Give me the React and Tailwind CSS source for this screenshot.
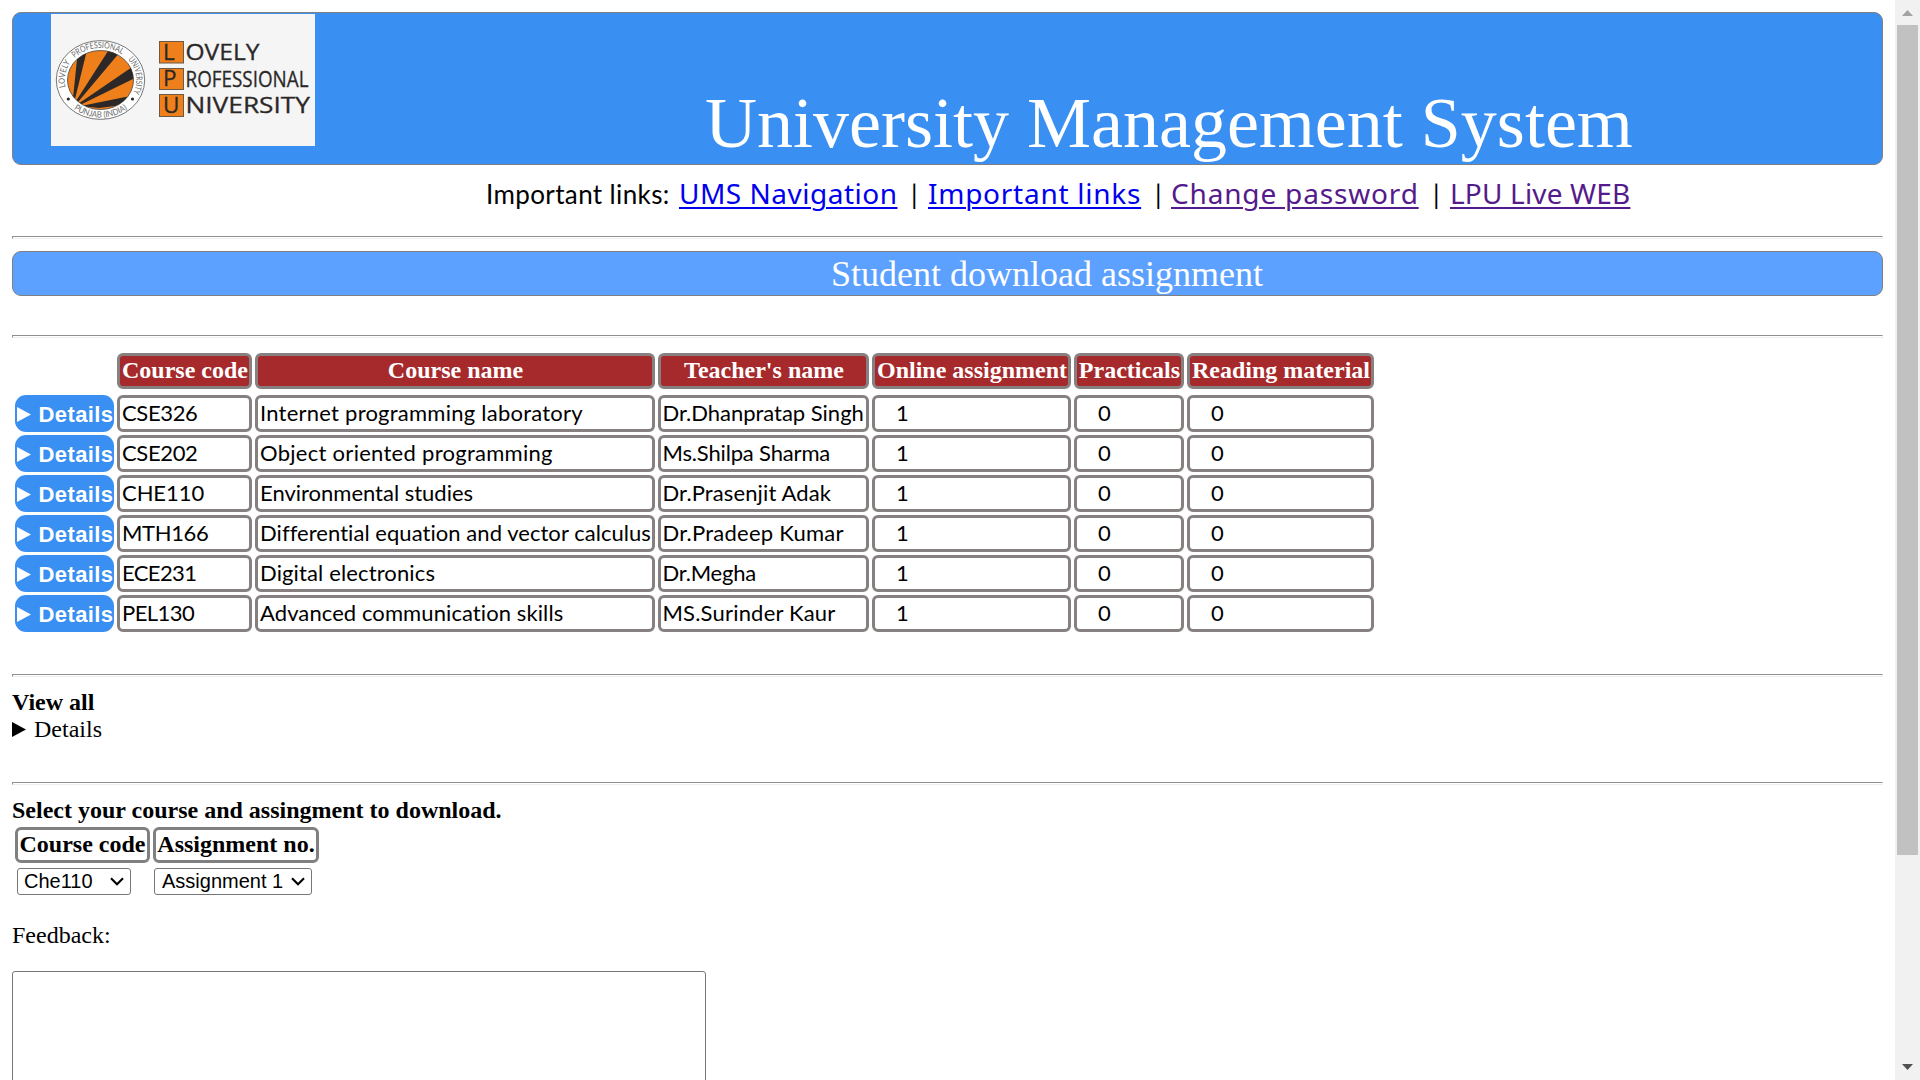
const serif = "font-['Liberation_Serif',serif]";
const lato = "font-['Lato',sans-serif]";

const COLS = "grid grid-cols-[99px_135px_400px_211px_199px_110px_187px] gap-x-[3px]";

const headers = [
  "Course code",
  "Course name",
  "Teacher's name",
  "Online assignment",
  "Practicals",
  "Reading material",
];

const courses = [
  ["CSE326", "tracking-[-0.36px]", "Internet programming laboratory", "tracking-[0.24px]", "Dr.Dhanpratap Singh", "tracking-[-0.02px]"],
  ["CSE202", "tracking-[-0.36px]", "Object oriented programming", "tracking-[0.28px]", "Ms.Shilpa Sharma", "tracking-[-0.16px]"],
  ["CHE110", "tracking-[-0.06px]", "Environmental studies", "tracking-[-0.01px]", "Dr.Prasenjit Adak", "tracking-[0.12px]"],
  ["MTH166", "tracking-[-0.34px]", "Differential equation and vector calculus", "tracking-[0.05px]", "Dr.Pradeep Kumar", "tracking-[0.24px]"],
  ["ECE231", "tracking-[-0.6px]", "Digital electronics", "tracking-[0.13px]", "Dr.Megha", "tracking-[-0.2px]"],
  ["PEL130", "tracking-[-0.55px]", "Advanced communication skills", "tracking-[0.09px]", "MS.Surinder Kaur", "tracking-[0.19px]"],
];

function Rule({ className = "" }) {
  return (
    <div className={`h-[3px] shrink-0 border border-t-[#8f8f8f] border-l-[#8f8f8f] border-r-[#eeeeee] border-b-[#eeeeee] ${className}`} />
  );
}

function Cell({ children, className = "" }) {
  return (
    <div className={`h-[37px] whitespace-nowrap rounded-[6px] border-[3px] border-[#868080] pt-px text-[22px] leading-[27px] ${lato} ${className}`}>
      {children}
    </div>
  );
}

function Logo() {
  return (
    <svg width="264" height="132" viewBox="0 0 264 132" className="ml-[38px] mt-px block shrink-0 bg-[#f5f5f5]">
      <defs>
        <clipPath id="sun">
          <ellipse cx="49.5" cy="66" rx="33" ry="29.5" />
        </clipPath>
        <path id="ring" d="M 49.5 98 A 35.8 32 0 0 1 49.5 34 A 35.8 32 0 0 1 49.5 98" />
        <path id="ringLow" d="M 7.5 66 A 42 37.5 0 0 0 91.5 66" />
      </defs>
      <ellipse cx="49.5" cy="66" rx="44.2" ry="39.4" fill="#fff" stroke="#555" strokeWidth="0.8" />
      <ellipse cx="49.5" cy="66" rx="33" ry="29.5" fill="#ee7f1a" stroke="#444" strokeWidth="0.8" />
      <g clipPath="url(#sun)" fill="#2b2827">
        <path d="M22 84 L27 36 L36 36 L24 85 Z" />
        <path d="M25 87 L59 34 L69 38 L27 88 Z" />
        <path d="M27 90 L84 51 L84 64 L29 91 Z" />
        <path d="M30 92 L84 81 L80 90 L48 94 Z" />
      </g>
      <g fill="#666" fontFamily="Lato, sans-serif" fontSize="8.6">
        <text>
          <textPath href="#ring" startOffset="46" textLength="26" lengthAdjust="spacingAndGlyphs">LOVELY</textPath>
        </text>
        <text>
          <textPath href="#ring" startOffset="78" textLength="51" lengthAdjust="spacingAndGlyphs">PROFESSIONAL</textPath>
        </text>
        <text>
          <textPath href="#ring" startOffset="137" textLength="36" lengthAdjust="spacingAndGlyphs">UNIVERSITY</textPath>
        </text>
        <text>
          <textPath href="#ringLow" startOffset="34" textLength="57" lengthAdjust="spacingAndGlyphs">PUNJAB (INDIA)</textPath>
        </text>
      </g>
      <circle cx="17.3" cy="85" r="1.6" fill="#2b2827" />
      <circle cx="81.5" cy="85" r="1.6" fill="#2b2827" />
      <g fill="#ee7f1a" stroke="#6b5a48" strokeWidth="1">
        <rect x="108.5" y="27.5" width="24" height="21.5" />
        <rect x="108.5" y="54.5" width="24" height="21" />
        <rect x="108.5" y="80.5" width="24" height="22" />
      </g>
      <g fill="#2b2827" stroke="#2b2827" strokeWidth="0.3" fontFamily="'Open Sans', sans-serif" fontSize="22.5">
        <text x="112" y="45.5">L</text>
        <text x="112" y="72">P</text>
        <text x="112" y="98.5">U</text>
        <text x="134.5" y="46" textLength="74" lengthAdjust="spacingAndGlyphs">OVELY</text>
        <text x="134.5" y="72.5" textLength="123" lengthAdjust="spacingAndGlyphs">ROFESSIONAL</text>
        <text x="134.5" y="98.7" textLength="124.5" lengthAdjust="spacingAndGlyphs">NIVERSITY</text>
      </g>
    </svg>
  );
}

function Select({ label, className }) {
  return (
    <div className={`flex h-[27px] items-center justify-between rounded-[3px] border border-[#767676] bg-white pr-[6px] font-['Liberation_Sans',sans-serif] text-[20px] leading-[25px] text-black ${className}`}>
      <span className="whitespace-nowrap">{label}</span>
      <svg width="14" height="9" viewBox="0 0 14 9" fill="none" stroke="#000" strokeWidth="2.1">
        <path d="M1 1.2 L7 7.2 L13 1.2" />
      </svg>
    </div>
  );
}

export default function App() {
  return (
    <div className={`flex h-[1080px] w-[1920px] overflow-hidden bg-white text-[24px] leading-[27px] text-black ${serif}`}>
      <main className="flex w-[1895px] flex-col pl-3 pr-3 pt-3">
        <header className="flex h-[153px] shrink-0 rounded-[9px] border border-[#808080] bg-[#398ff2]">
          <Logo />
          <h1 className="ml-[390px] mt-[69px] whitespace-nowrap text-[72px] leading-[82px] text-white">
            University Management System
          </h1>
        </header>

        <nav className="flex h-[71px] shrink-0 items-baseline whitespace-nowrap pl-[474px] pt-[7px] font-['Noto_Sans',sans-serif] text-[28px] leading-[42px] text-[#0000ee]">
          <span className={`w-[193px] text-[26px] tracking-[0.38px] text-black ${lato}`}>Important links:</span>
          <a className="w-[218px] tracking-[0.5px] underline decoration-2 underline-offset-[3px]">UMS Navigation</a>
          <span className={`w-[31px] pl-[14px] text-[26px] text-black ${lato}`}>|</span>
          <a className="w-[213px] tracking-[0.74px] underline decoration-2 underline-offset-[3px]">Important links</a>
          <span className={`w-[30px] pl-[14px] text-[26px] text-black ${lato}`}>|</span>
          <a className="w-[248px] tracking-[0.83px] text-[#551a8b] underline decoration-2 underline-offset-[3px]">Change password</a>
          <span className={`w-[31px] pl-[14px] text-[26px] text-black ${lato}`}>|</span>
          <a className="tracking-[0.17px] text-[#551a8b] underline decoration-2 underline-offset-[3px]">LPU Live WEB</a>
        </nav>

        <Rule />
        <h2 className="mt-3 h-[45px] shrink-0 rounded-[9px] border border-[#808080] bg-[#5ca1ff] pl-[818px] text-[36px] leading-[44px] text-white">
          Student download assignment
        </h2>
        <Rule className="mt-[39px]" />

        <section className="mt-[15px] flex flex-col pl-[3px]">
          <div className={`mb-[6px] ${COLS}`}>
            <span />
            {headers.map((h) => (
              <div key={h} className="flex h-9 justify-center whitespace-nowrap rounded-[6px] border-[3px] border-[#868080] bg-[#a6292b] pl-px pt-px font-bold text-white">
                {h}
              </div>
            ))}
          </div>
          <div className="flex flex-col gap-[3px]">
            {courses.map(([code, codeT, name, nameT, teacher, teacherT]) => (
              <div key={code} className={COLS}>
                <div className="flex h-[37px] items-center rounded-[11px] bg-[#398ff2] pl-[1.5px] font-['Liberation_Sans',sans-serif] text-[22px] font-bold text-white">
                  <svg width="14" height="15" viewBox="0 0 14 15" className="mt-px shrink-0" fill="#fff">
                    <path d="M0 0 L14 7.5 L0 15 Z" />
                  </svg>
                  <span className="ml-[8px] mt-[2px] tracking-[0.4px]">Details</span>
                </div>
                <Cell className={`pl-[2px] ${codeT}`}>{code}</Cell>
                <Cell className={`pl-[2px] ${nameT}`}>{name}</Cell>
                <Cell className={`pl-[1.5px] ${teacherT}`}>{teacher}</Cell>
                <Cell className="pl-[21px]">1</Cell>
                <Cell className="pl-[21px]">0</Cell>
                <Cell className="pl-[21px]">0</Cell>
              </div>
            ))}
          </div>
        </section>

        <Rule className="mt-[42px]" />
        <p className="mt-3 font-bold">View all</p>
        <div className="flex items-center">
          <svg width="14" height="15" viewBox="0 0 14 15" fill="#000">
            <path d="M0 0 L14 7.5 L0 15 Z" />
          </svg>
          <span className="ml-2">Details</span>
        </div>

        <Rule className="mt-[39px]" />
        <p className="mt-3 font-bold">Select your course and assingment to download.</p>
        <div className="mt-[3px] flex gap-[3px] pl-[3px] font-bold">
          <div className="flex h-9 w-[135px] justify-center whitespace-nowrap rounded-[6px] border-[3px] border-[#808080] pt-px">Course code</div>
          <div className="flex h-9 w-[166px] justify-center whitespace-nowrap rounded-[6px] border-[3px] border-[#808080] pt-px">Assignment no.</div>
        </div>
        <div className="mt-[5px] flex pl-[5px]">
          <Select label="Che110" className="w-[114px] pl-[6px]" />
          <Select label="Assignment 1" className="ml-[23px] w-[158px] pl-[7px]" />
        </div>

        <p className="mt-[27px]">Feedback:</p>
        <textarea className="mt-[22px] h-[180px] w-[694px] shrink-0 resize-none rounded-[3px] border border-[#767676] bg-white" />
      </main>

      <aside className="flex w-[25px] shrink-0 flex-col items-center bg-[#f1f1f1]">
        <svg width="11" height="6" viewBox="0 0 11 6" className="mt-[10px] shrink-0" fill="#a3a3a3">
          <path d="M5.5 0 L11 6 L0 6 Z" />
        </svg>
        <div className="mt-[9px] h-[830px] w-[21px] shrink-0 bg-[#c1c1c1]" />
        <svg width="11" height="6" viewBox="0 0 11 6" className="mb-[10px] mt-auto shrink-0" fill="#505050">
          <path d="M0 0 L11 0 L5.5 6 Z" />
        </svg>
      </aside>
    </div>
  );
}
